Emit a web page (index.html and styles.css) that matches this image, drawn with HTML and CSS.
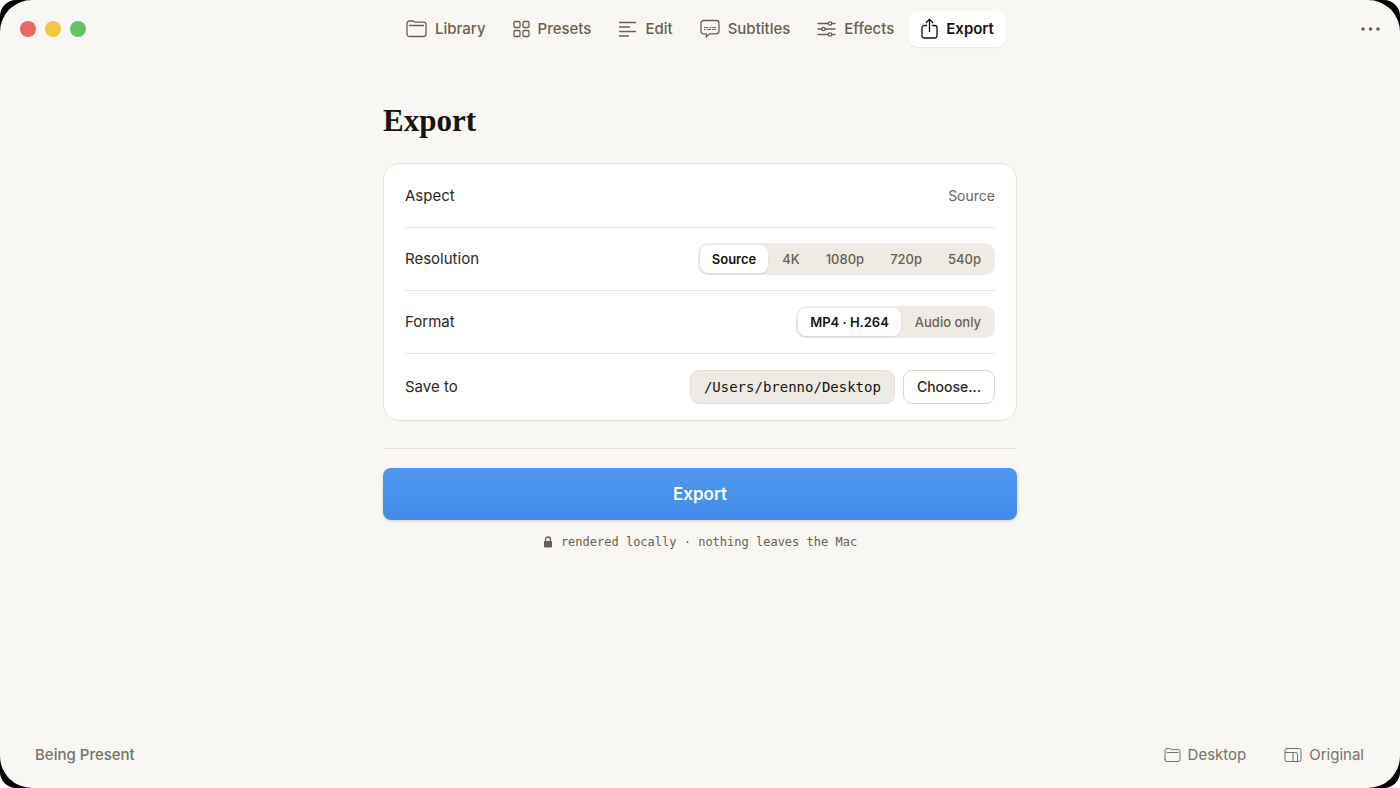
FILE: index.html
```html
<!DOCTYPE html>
<html lang="en">
<head>
	<meta charset="UTF-8">
	<meta name="viewport" content="width=device-width, initial-scale=1">
	<title>Export</title>
	<link rel="stylesheet" href="styles.css">
</head>
<body>
	<div class="backdrop">
	<div class="window">
		<header class="titlebar">
			<div class="lights">
				<button class="light close" type="button" aria-label="Close"></button>
				<button class="light minimize" type="button" aria-label="Minimize"></button>
				<button class="light expand" type="button" aria-label="Zoom"></button>
			</div>
			<nav class="tabs">
				<a class="tab" href="#library">
					<svg width="21" height="20" viewBox="0 0 21 20"><path d="M1 15V4.500Q1 2 3.500 2H6.500Q7.500 2 8.200 2.600L9 3.200H17.500Q20 3.200 20 5.700V15Q20 17.500 17.500 17.500H3.500Q1 17.500 1 15ZM3.500 6.500H17.500"/></svg>
					Library
				</a>
				<a class="tab" href="#presets">
					<svg width="17" height="18" viewBox="0 0 17 18"><rect x="1" y="1.500" width="6" height="6" rx="1.300"/><rect x="10" y="1.500" width="6" height="6" rx="1.300"/><rect x="1" y="10.500" width="6" height="6" rx="1.300"/><rect x="10" y="10.500" width="6" height="6" rx="1.300"/></svg>
					Presets
				</a>
				<a class="tab" href="#edit">
					<svg width="19" height="18" viewBox="0 0 19 18"><path d="M1.500 2.500H17.500M1.500 7H11.500M1.500 11.500H17.500M1.500 16H10.500"/></svg>
					Edit
				</a>
				<a class="tab" href="#subtitles">
					<svg width="20" height="20" viewBox="0 0 20 20"><path d="M3.800 1.500H16.200Q19 1.500 19 4.300V12Q19 14.800 16.200 14.800H9.500L6.300 18V14.800H3.800Q1 14.800 1 12V4.300Q1 1.500 3.800 1.500Z"/><path class="thin" d="M4.500 8.500H7.500M9.500 8.500H10.500M12.500 8.500H15.500M4.500 10.500H5.500M7.500 10.500H10.500M12.500 10.500H15.500"/></svg>
					Subtitles
				</a>
				<a class="tab" href="#effects">
					<svg width="19" height="18" viewBox="0 0 19 18"><path d="M1 3.500H11.300M14.700 3.500H18M1 9H4.800M8.200 9H18M1 14.500H11.300M14.700 14.500H18"/><circle cx="13" cy="3.500" r="1.700"/><circle cx="6.500" cy="9" r="1.700"/><circle cx="13" cy="14.500" r="1.700"/></svg>
					Effects
				</a>
				<a class="tab active" href="#export" aria-current="page">
					<svg width="17" height="22" viewBox="0 0 17 22"><path d="M5.500 7.500H3.500Q1 7.500 1 10V17.500Q1 20 3.500 20H13.500Q16 20 16 17.500V10Q16 7.500 13.500 7.500H11.500M8.500 13.500V1.500M5.300 4.500L8.500 1.300L11.700 4.500"/></svg>
					Export
				</a>
			</nav>
			<button class="more" type="button" aria-label="More">
				<svg width="20" height="6" viewBox="0 0 20 6"><circle cx="3" cy="3" r="1.800"/><circle cx="10.500" cy="3" r="1.800"/><circle cx="18" cy="3" r="1.800"/></svg>
			</button>
		</header>

		<main class="content">
			<h1>Export</h1>
			<div class="card">
				<div class="row">
					<span>Aspect</span>
					<span class="value">Source</span>
				</div>
				<div class="row">
					<span id="resolution">Resolution</span>
					<div class="segments" role="group" aria-labelledby="resolution">
						<button class="segment active" type="button" aria-pressed="true">Source</button>
						<button class="segment" type="button" aria-pressed="false">4K</button>
						<button class="segment" type="button" aria-pressed="false">1080p</button>
						<button class="segment" type="button" aria-pressed="false">720p</button>
						<button class="segment" type="button" aria-pressed="false">540p</button>
					</div>
				</div>
				<div class="row">
					<span id="format">Format</span>
					<div class="segments" role="group" aria-labelledby="format">
						<button class="segment active" type="button" aria-pressed="true">MP4 · H.264</button>
						<button class="segment" type="button" aria-pressed="false">Audio only</button>
					</div>
				</div>
				<div class="row">
					<span>Save to</span>
					<div class="save">
						<code class="path">/Users/brenno/Desktop</code>
						<button class="choose" type="button">Choose...</button>
					</div>
				</div>
			</div>
			<div class="actions">
				<button class="export" type="button">Export</button>
				<p class="note">
					<svg width="10" height="12" viewBox="0 0 10 12"><path class="shackle" d="M2.500 6V3.500Q2.500 1 5 1Q7.500 1 7.500 3.500V6"/><rect x="1" y="5" width="8" height="6.500" rx="1"/></svg>
					rendered locally · nothing leaves the Mac
				</p>
			</div>
		</main>

		<footer class="statusbar">
			<span class="project">Being Present</span>
			<a href="#desktop">
				<svg width="17" height="16" viewBox="0 0 17 16"><path d="M1 12.500V3.500Q1 1.500 3 1.500H5.200Q6 1.500 6.600 2L7.300 2.600H14Q16 2.600 16 4.600V12.500Q16 14.500 14 14.500H3Q1 14.500 1 12.500ZM3 5.500H14"/></svg>
				Desktop
			</a>
			<a href="#original">
				<svg width="18" height="16" viewBox="0 0 18 16"><rect x="1" y="1.500" width="16" height="13" rx="2"/><path d="M1 5.500H11.500Q13.500 5.500 13.500 7.500V14.500M9 5.500V14.500"/></svg>
				Original
			</a>
		</footer>
	</div>
	</div>
</body>
</html>
```
FILE: styles.css
```css
* {
	box-sizing: border-box;
}
body {
	margin: 0;
	background: #fff;
	color: #2e271f;
	font: 15px/20px Inter, "Liberation Sans", sans-serif;
}
button {
	padding: 0;
	border: 0;
	background: none;
	font: inherit;
	color: inherit;
}
a {
	color: inherit;
	text-decoration: none;
}
svg {
	flex: none;
	fill: none;
	stroke: currentColor;
	stroke-width: 1.3;
	stroke-linecap: round;
	stroke-linejoin: round;
}

.backdrop {
	min-height: 100vh;
	border-radius: 16px;
	background: #000;
}
.window {
	display: flex;
	flex-direction: column;
	min-height: 100vh;
	border-radius: 32px;
	background: #f8f7f3;
}

/* title bar */
.titlebar {
	display: grid;
	grid-template-columns: 1fr auto 1fr;
	align-items: center;
	height: 57px;
	padding: 0 20px;
}
.lights {
	display: flex;
	gap: 9px;
}
.light {
	width: 16px;
	height: 16px;
	border-radius: 50%;
}
.close {
	background: #ed6764;
}
.minimize {
	background: #f2c840;
}
.expand {
	background: #62c264;
}
.tabs {
	display: flex;
	gap: 3px;
}
.tab {
	display: flex;
	align-items: center;
	gap: 8px;
	height: 36px;
	padding: 0 12px;
	border-radius: 9px;
	color: #6b5f4e;
	font-weight: 500;
}
.tab.active {
	background: #fff;
	box-shadow: 0 1px 2px rgba(60, 50, 30, .08);
	color: #17130f;
	font-weight: 600;
}
.thin {
	stroke-width: 1;
}
.more {
	display: flex;
	justify-self: end;
	color: #6b5f4e;
}
.more svg {
	fill: currentColor;
	stroke: none;
}

/* export form */
.content {
	flex: 1;
	width: 100%;
	max-width: 634px;
	margin: 0 auto;
	padding-top: 44px;
}
h1 {
	margin: 0 0 22px;
	color: #17130f;
	font: bold 31px/40px "Liberation Serif", serif;
}
.card {
	padding: 1px 21px 0;
	border: 1px solid #e6e1d3;
	border-radius: 17px;
	background: #fff;
}
.row {
	display: flex;
	justify-content: space-between;
	align-items: center;
	min-height: 63px;
	border-bottom: 1px solid #e9e4d8;
}
.row:last-child {
	min-height: 66px;
	border-bottom: 0;
}
.value {
	color: #6a6764;
	font-size: 14px;
}
.segments {
	display: flex;
	gap: 2px;
	padding: 2px;
	border-radius: 10px;
	background: #eeebe4;
}
.segment {
	height: 28px;
	padding: 0 12px;
	border-radius: 8px;
	color: #6b5f4e;
	font-size: 13px;
	font-weight: 500;
}
.segment.active {
	background: #fff;
	box-shadow: 0 1px 2px rgba(60, 50, 30, .12);
	color: #17130f;
	font-weight: 600;
}
.save {
	display: flex;
	gap: 8px;
}
.path,
.choose {
	height: 34px;
	padding: 0 13px;
	border: 1px solid #e4dfd1;
	border-radius: 9px;
	font-size: 14px;
	line-height: 32px;
}
.path {
	background: #eeebe4;
	color: #17130f;
	font-family: "DejaVu Sans Mono", monospace;
}
.choose {
	border-color: #ddd5c5;
	background: #fff;
	font-weight: 500;
}

.actions {
	margin-top: 27px;
	padding-top: 19px;
	border-top: 1px solid #e6e1d3;
}
.export {
	display: block;
	width: 100%;
	height: 52px;
	border-radius: 8px;
	background: linear-gradient(#5099ef, #418be9);
	box-shadow: 0 1px 3px rgba(40, 60, 100, .2);
	color: #fff;
	font-size: 17px;
	font-weight: 600;
}
.note {
	display: flex;
	justify-content: center;
	align-items: center;
	gap: 8px;
	margin: 12px 0;
	color: #6b5f4e;
	font: 12px/20px "DejaVu Sans Mono", monospace;
}
.note svg {
	fill: currentColor;
	stroke: none;
}
.note .shackle {
	fill: none;
	stroke: currentColor;
}

/* status bar */
.statusbar {
	display: flex;
	align-items: center;
	gap: 38px;
	height: 66px;
	padding: 0 36px 0 35px;
	color: #77736b;
}
.statusbar a {
	display: flex;
	align-items: center;
	gap: 7px;
}
.statusbar svg {
	stroke-width: 1;
}
.project {
	margin-right: auto;
	font-weight: 500;
}
```
